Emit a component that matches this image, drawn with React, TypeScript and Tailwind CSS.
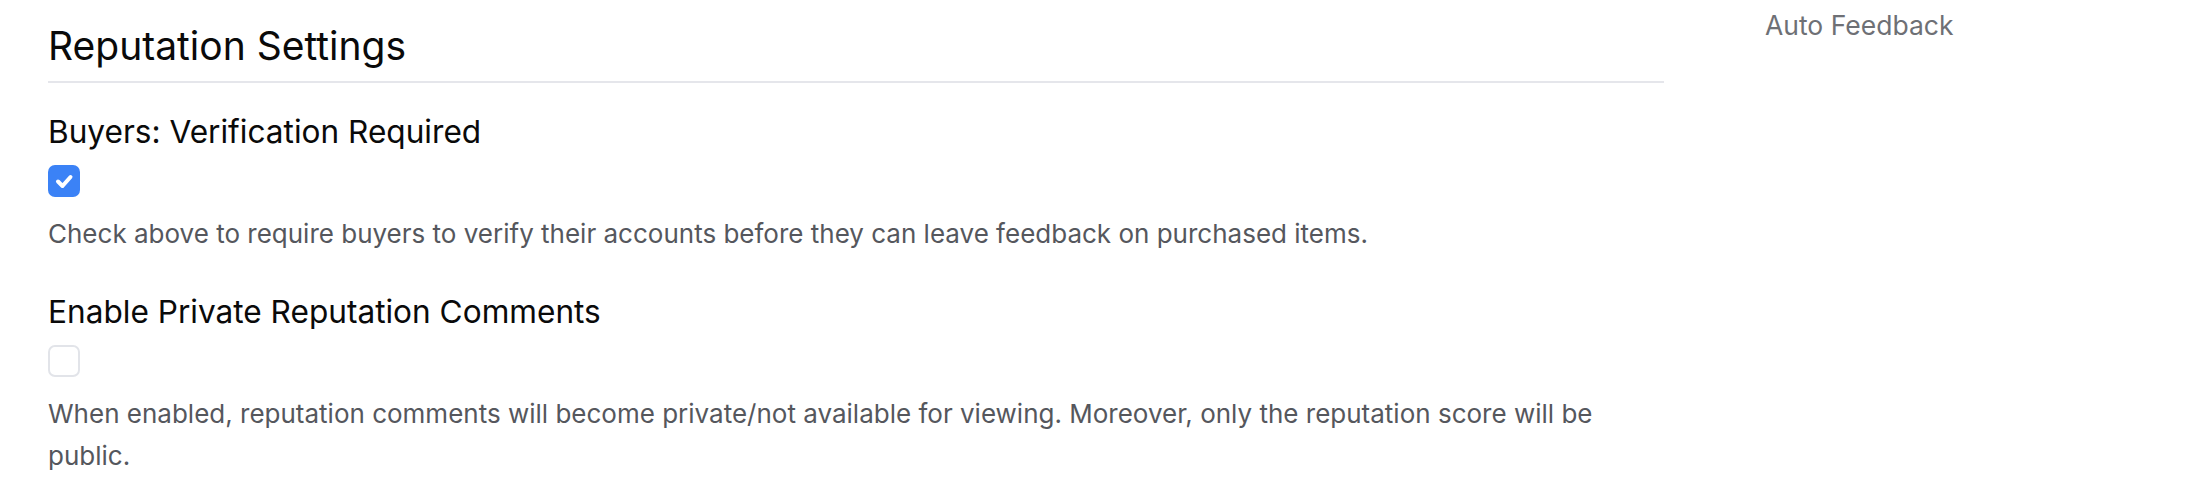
import React from 'react';

const Checkbox: React.FC<{ checked?: boolean }> = ({ checked }) =>
  checked ? (
    <div className="w-[32px] h-[32px] rounded-[7px] bg-[#3b82f6] flex items-center justify-center">
      <svg width="32" height="32" viewBox="0 0 32 32" fill="none">
        <polyline points="10,16.5 14.5,21 22.5,12" stroke="white" strokeWidth="4" strokeLinecap="round" strokeLinejoin="round" />
      </svg>
    </div>
  ) : (
    <div className="w-[32px] h-[32px] rounded-[7px] border-2 border-[#e2e4e9] bg-white" />
  );

export default function App() {
  return (
    <div className="flex w-[2200px] h-[478px] bg-white" style={{ fontFamily: 'Inter, "Noto Sans", sans-serif' }}>
      <main className="w-[1616px] ml-[48px] pt-[22px]">
        {/* Section header */}
        <h1 className="text-[39px] leading-[48px] text-[#0a0a0a]">Reputation Settings</h1>
        <div className="mt-[11px] h-[2px] bg-[#e5e6eb]" />

        <h2 className="mt-[29px] text-[31.6px] leading-[40px] text-[#0a0a0a]">Buyers: Verification Required</h2>
        <div className="mt-[13px]">
          <Checkbox checked />
        </div>
        <p className="mt-[16px] text-[26px] leading-[42px] text-[#55575d]">
          Check above to require buyers to verify their accounts before they can leave feedback on purchased items.
        </p>

        <h2 className="mt-[37px] text-[31.6px] leading-[40px] text-[#0a0a0a]">Enable Private Reputation Comments</h2>
        <div className="mt-[13px]">
          <Checkbox />
        </div>
        <p className="mt-[16px] text-[26px] leading-[42px] text-[#55575d]">
          When enabled, reputation comments will become private/not available for viewing. Moreover, only the reputation score will be public.
        </p>
      </main>

      <aside className="ml-[101px] pt-[7px]">
        <p className="text-[26.5px] leading-[36px] text-[#6e7075]">Auto Feedback</p>
      </aside>
    </div>
  );
}
